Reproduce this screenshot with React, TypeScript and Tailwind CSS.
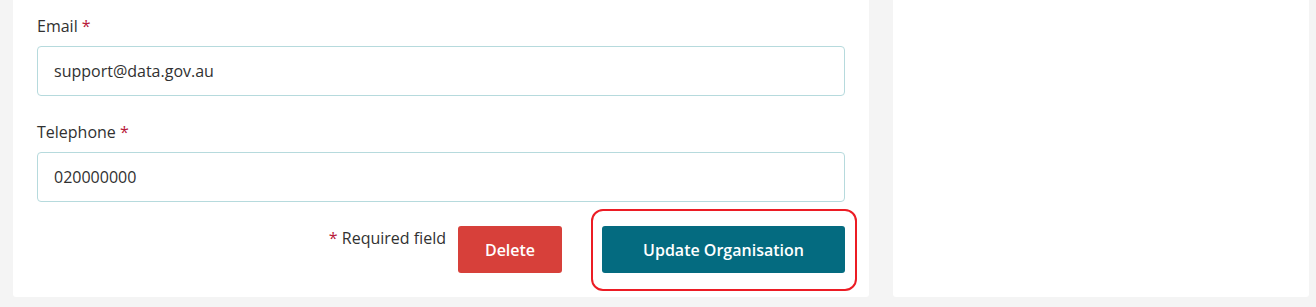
import React from "react";

const FONT = { fontFamily: '"Open Sans", "Noto Sans", sans-serif' };

function Field({ label, value }: { label: string; value: string }) {
  return (
    <div className="flex flex-col gap-2">
      <label className="text-[16px] leading-6 text-[#313131]">
        {label} <span className="text-[#b8173a]">*</span>
      </label>
      <input
        readOnly
        value={value}
        className="h-[50px] w-full rounded-[4px] border border-[#b6dadd] bg-white px-4 text-[16px] text-[#313131] outline-none"
      />
    </div>
  );
}

export default function App() {
  return (
    <div
      className="flex h-[307px] w-[1316px] gap-6 overflow-hidden bg-[#f4f4f4] pl-[13px] pr-[7px]"
      style={FONT}
    >
      <div className="flex h-[297px] w-[856px] flex-col gap-6 rounded-b-[3px] bg-white px-6 pb-6 pt-[14px]">
        <Field label="Email" value="support@data.gov.au" />
        <Field label="Telephone" value="020000000" />
        <div className="flex items-start justify-end">
          <span className="mr-3 text-[16px] leading-6 text-[#313131]">
            <span className="text-[#b8173a]">*</span> Required field
          </span>
          <button className="mr-10 h-[47px] w-[104px] rounded-[3px] bg-[#d7403a] text-[16px] font-semibold text-white">
            Delete
          </button>
          <div className="relative">
            <button className="h-[47px] w-[243px] rounded-[3px] bg-[#046b80] text-[16px] font-semibold text-white">
              Update Organisation
            </button>
            <div className="pointer-events-none absolute -bottom-[18px] -left-[11px] -right-[12px] -top-[17px] rounded-[12px] border-2 border-[#ec1c24]" />
          </div>
        </div>
      </div>
      <div className="h-[297px] flex-1 rounded-b-[3px] bg-white" />
    </div>
  );
}
